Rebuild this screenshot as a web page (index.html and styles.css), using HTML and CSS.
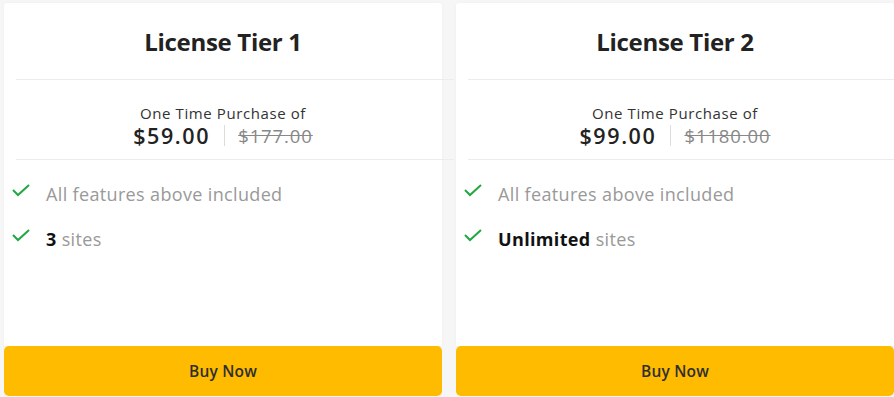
FILE: index.html
```html
<!DOCTYPE html>
<html>
<head>
<meta charset="utf-8">
<link rel="stylesheet" href="styles.css">
</head>
<body>
<div class="tiers">
  <div class="tier">
    <div class="card">
      <h2 class="title">License Tier 1</h2>
      <div class="rule"></div>
      <div class="price-block">
        <div class="once">One Time Purchase of</div>
        <div class="prices"><span class="now">$59.00</span><span class="sep"></span><span class="was">$177.00</span></div>
      </div>
      <div class="rule"></div>
      <ul class="features">
        <li><svg class="check" viewBox="0 0 18 14"><polyline points="1,6 6,11 17,1" /></svg><span class="muted">All features above included</span></li>
        <li><svg class="check" viewBox="0 0 18 14"><polyline points="1,6 6,11 17,1" /></svg><span><b>3</b> <span class="muted">sites</span></span></li>
      </ul>
    </div>
    <button class="buy">Buy Now</button>
  </div>
  <div class="tier">
    <div class="card">
      <h2 class="title">License Tier 2</h2>
      <div class="rule"></div>
      <div class="price-block">
        <div class="once">One Time Purchase of</div>
        <div class="prices"><span class="now">$99.00</span><span class="sep"></span><span class="was">$1180.00</span></div>
      </div>
      <div class="rule"></div>
      <ul class="features">
        <li><svg class="check" viewBox="0 0 18 14"><polyline points="1,6 6,11 17,1" /></svg><span class="muted">All features above included</span></li>
        <li><svg class="check" viewBox="0 0 18 14"><polyline points="1,6 6,11 17,1" /></svg><span><b>Unlimited</b> <span class="muted">sites</span></span></li>
      </ul>
    </div>
    <button class="buy">Buy Now</button>
  </div>
</div>
</body>
</html>
```
FILE: styles.css
```css
html, body {
  margin: 0;
  padding: 0;
  background: #f6f6f7;
  font-family: "Open Sans", "Lato", sans-serif;
  overflow: hidden;
}
.tiers {
  display: flex;
  gap: 14px;
  padding: 3px 0 0 4px;
}
.tier {
  width: 438px;
  display: flex;
  flex-direction: column;
}
.card {
  background: #fff;
  height: 343px;
  box-shadow: 0 0 3px rgba(0,0,0,0.04);
  border-radius: 3px 3px 0 0;
}
.title {
  margin: 0;
  height: 76px;
  display: flex;
  align-items: center;
  justify-content: center;
  font-size: 24px;
  letter-spacing: -0.3px;
  font-weight: 700;
  color: #222;
}
.rule {
  height: 1px;
  background: #ececec;
  margin-left: 12px;
  width: 438px;
}
.price-block {
  height: 79px;
  display: flex;
  flex-direction: column;
  align-items: center;
  justify-content: center;
  padding-top: 12px;
  box-sizing: border-box;
}
.once {
  font-size: 15px;
  letter-spacing: 0.6px;
  color: #333;
  line-height: 20px;
}
.prices {
  display: flex;
  align-items: center;
  line-height: 26px;
}
.now {
  font-size: 21.5px;
  letter-spacing: 1.6px;
  font-weight: 600;
  color: #222;
}
.sep {
  width: 1px;
  height: 21px;
  background: #ddd;
  margin: 0 13px 0 14px;
}
.was {
  font-size: 18.5px;
  letter-spacing: 0.9px;
  color: #888;
  text-decoration: line-through;
}
.features {
  list-style: none;
  margin: 0;
  padding: 11px 0 0 8px;
}
.features li {
  display: flex;
  align-items: center;
  height: 45px;
  font-size: 18px;
  letter-spacing: 0.35px;
}
.check {
  width: 18px;
  height: 14px;
  margin: -6px 16px 0 0;
  fill: none;
  stroke: #21a843;
  stroke-width: 2;
}
.muted {
  color: #999;
}
.features b {
  color: #111;
  font-weight: 700;
}
.buy {
  height: 50px;
  border: none;
  border-radius: 5px;
  background: #ffbb00;
  color: #2e2e2e;
  font-family: "Open Sans", sans-serif;
  font-size: 15.5px;
  letter-spacing: 0.2px;
  font-weight: 600;
  cursor: pointer;
}
```
